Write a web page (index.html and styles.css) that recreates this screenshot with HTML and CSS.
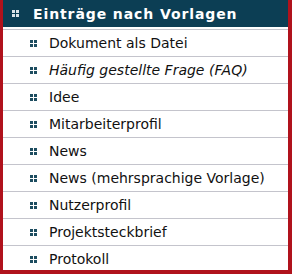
FILE: index.html
```html
<!DOCTYPE html>
<html lang="de">
<head>
    <meta charset="UTF-8">
    <title>Vorlagen</title>
    <link rel="stylesheet" href="styles.css">
</head>
<body>
    <div class="box">
        <div class="head">
            <span class="dots light"><i></i><i></i><i></i><i></i></span>
            <span>Einträge nach Vorlagen</span>
        </div>
        <ul class="list">
            <li><span class="dots"><i></i><i></i><i></i><i></i></span>Dokument als Datei</li>
            <li class="em"><span class="dots"><i></i><i></i><i></i><i></i></span>Häufig gestellte Frage (FAQ)</li>
            <li><span class="dots"><i></i><i></i><i></i><i></i></span>Idee</li>
            <li><span class="dots"><i></i><i></i><i></i><i></i></span>Mitarbeiterprofil</li>
            <li><span class="dots"><i></i><i></i><i></i><i></i></span>News</li>
            <li><span class="dots"><i></i><i></i><i></i><i></i></span>News (mehrsprachige Vorlage)</li>
            <li><span class="dots"><i></i><i></i><i></i><i></i></span>Nutzerprofil</li>
            <li><span class="dots"><i></i><i></i><i></i><i></i></span>Projektsteckbrief</li>
            <li><span class="dots"><i></i><i></i><i></i><i></i></span>Protokoll</li>
        </ul>
    </div>
</body>
</html>
```
FILE: styles.css
```css
html, body {
    margin: 0;
    padding: 0;
    background: #fff;
}
.box {
    width: 285px;
    height: 270px;
    border-left: 3px solid #b0121c;
    border-right: 4px solid #b0121c;
    border-bottom: 4px solid #b0121c;
    overflow: hidden;
    font-family: "DejaVu Sans", Verdana, sans-serif;
    font-size: 14px;
    color: #111;
}
.head {
    height: 27px;
    background: #0c3e54;
    color: #fff;
    font-weight: bold;
    letter-spacing: 0.9px;
    display: flex;
    align-items: center;
    padding-left: 9px;
    gap: 14px;
    margin-bottom: 2px;
}
.dots {
    display: grid;
    grid-template-columns: 3px 3px;
    grid-template-rows: 3px 3px;
    gap: 1px;
    flex: none;
}
.dots i {
    display: block;
    background: #1d4d60;
}
.dots.light i {
    background: #dbe4e8;
}
.list {
    list-style: none;
    margin: 0;
    padding: 0;
}
.list li {
    height: 26px;
    border-top: 1px solid #c4c4cc;
    display: flex;
    align-items: center;
    padding-left: 27px;
    gap: 12px;
}
.list li.em {
    font-style: italic;
}
```
